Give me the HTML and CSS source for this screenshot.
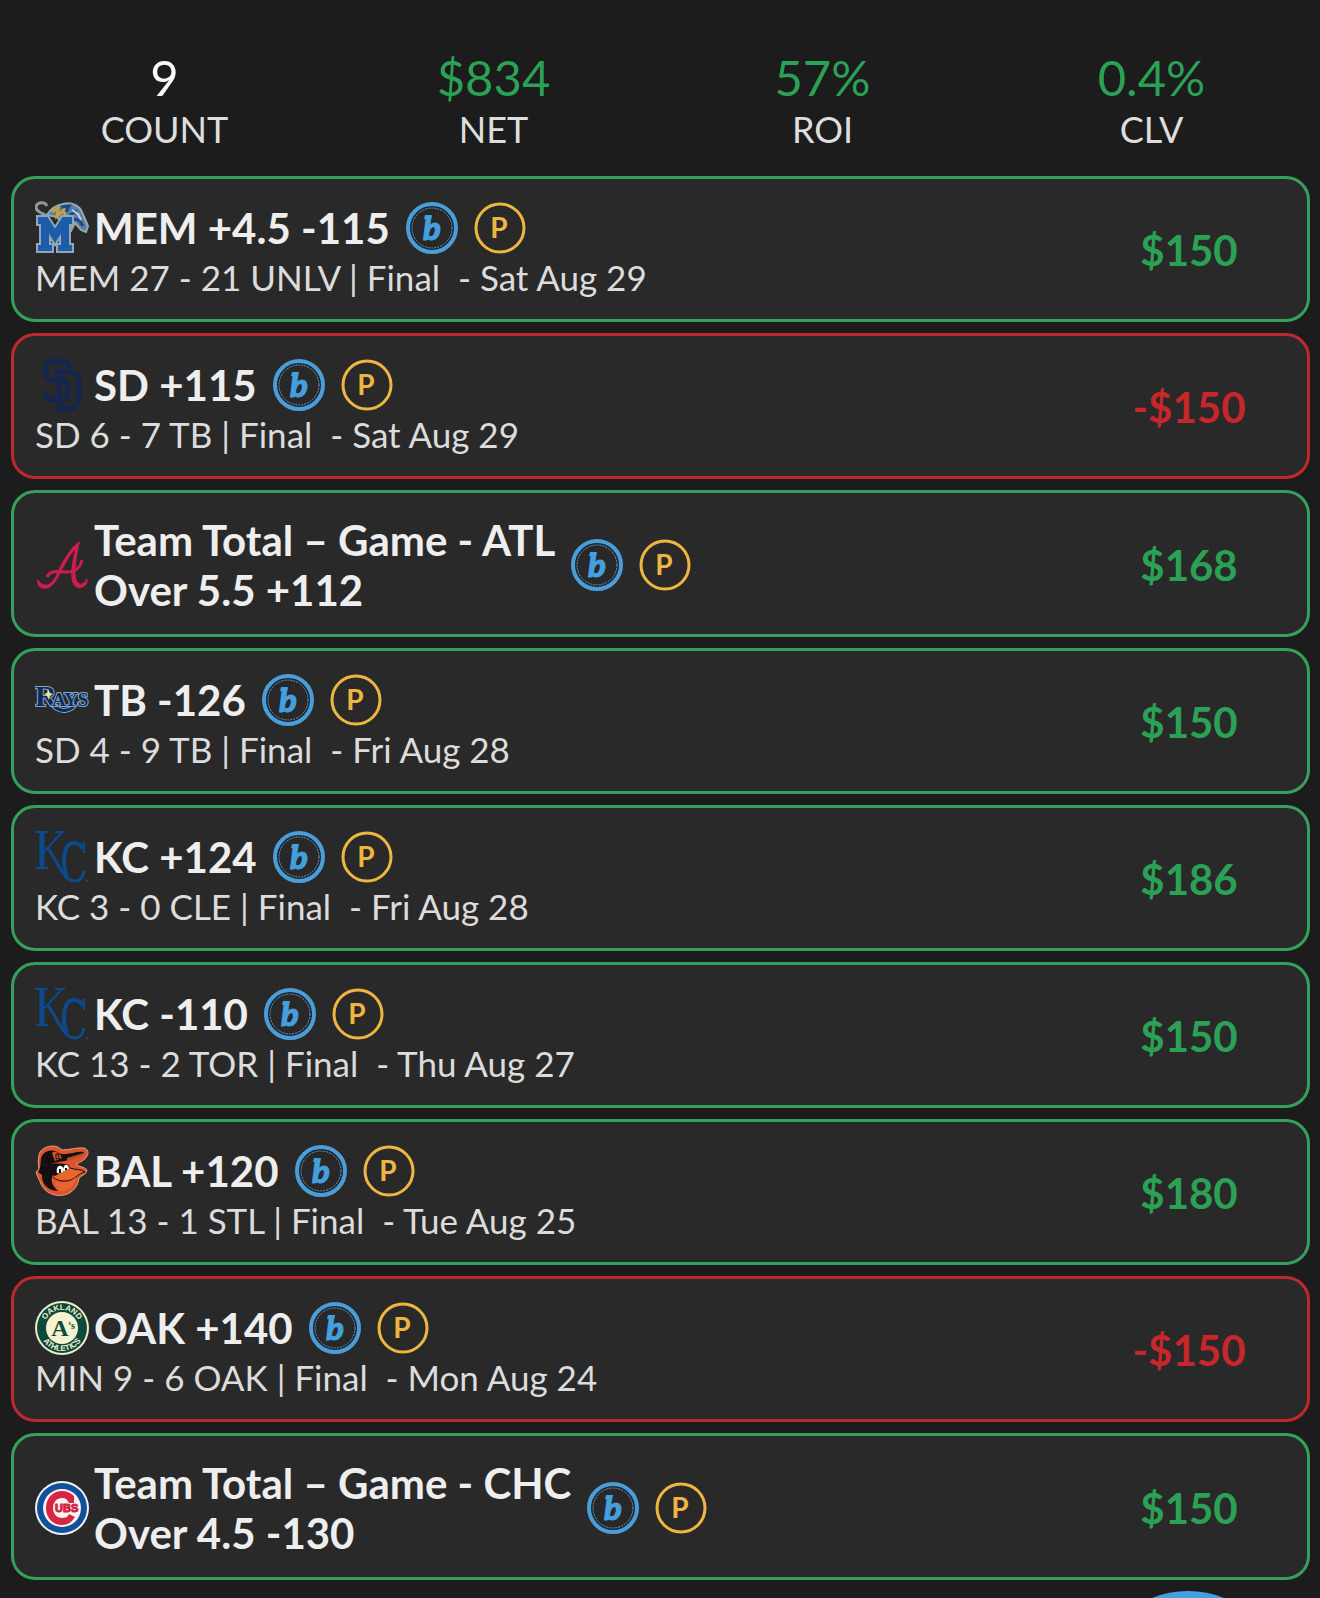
FILE: index.html
```html
<!DOCTYPE html>
<html lang="en">
<head>
<meta charset="utf-8">
<meta name="viewport" content="width=device-width, initial-scale=1">
<title>Bet history</title>
<link rel="stylesheet" href="styles.css">
</head>
<body>
<svg class="defs" aria-hidden="true">
  <symbol id="book" viewBox="0 0 52 52">
    <circle cx="26" cy="26" r="25" fill="#10263a"/>
    <circle cx="26" cy="26" r="20" fill="#282828"/>
    <circle cx="26" cy="26" r="24" fill="none" stroke="#4c9dd6" stroke-width="4"/>
    <circle cx="26" cy="26" r="20" fill="none" stroke="#8d979f" stroke-width="1" stroke-dasharray="2 1"/>
    <path d="M19 13H26L25 17H18Z" fill="#459fdf"/>
    <text class="book-letter" x="26" y="38" text-anchor="middle">b</text>
  </symbol>
  <symbol id="pending" viewBox="0 0 52 52">
    <circle cx="26" cy="26" r="24" fill="none" stroke="#efb541" stroke-width="3"/>
    <text class="pick-letter" x="25" y="36" text-anchor="middle">P</text>
  </symbol>
  <symbol id="kc" viewBox="0 0 54 54">
    <g fill="none" stroke="#0c4a8c">
      <path d="M7 2V38" stroke-width="5"/>
      <path d="M0 2H13M1 38H13M20 2H30" stroke-width="2"/>
      <path d="M26 3L9 22" stroke-width="2"/>
      <path d="M12 17C19 26 23 37 28 43C31 48 35 51 40 51C45 51 48 47 49 41" stroke-width="3"/>
      <path d="M48 19C46 14 43 13 39 13C32 13 29 21 29 31C29 37 30 42 32 46" stroke-width="4"/>
      <path d="M49 12V23M51 51H53" stroke-width="2"/>
    </g>
  </symbol>
</svg>

<main class="page">
  <dl class="stats">
    <div class="stat"><dd class="stat-value">9</dd><dt class="stat-label">COUNT</dt></div>
    <div class="stat"><dd class="stat-value gain">$834</dd><dt class="stat-label">NET</dt></div>
    <div class="stat"><dd class="stat-value gain">57%</dd><dt class="stat-label">ROI</dt></div>
    <div class="stat"><dd class="stat-value gain">0.4%</dd><dt class="stat-label">CLV</dt></div>
  </dl>

  <ul class="bets">
    <li class="bet won">
      <div class="info">
        <div class="headline">
          <svg class="logo" viewBox="0 0 54 54" role="img" aria-label="Memphis">
            <path d="M12 15C7 12 1 11 1 6C2 1 10 0 12 5" fill="none" stroke="#8f989f" stroke-width="3"/>
            <path d="M12 14C16 7 22 4 28 3C36 1 43 4 46 9L53 25L51 31L46 29L40 22L36 30L30 27L22 16Z" fill="#5b7fa5" stroke="#9ba6ad" stroke-width="2"/>
            <path d="M17 11L23 7L22 15L29 9L31 19M31 30L37 24" fill="none" stroke="#c9a03d" stroke-width="3"/>
            <path d="M26 6L34 5L31 11M35 14L42 10M38 18L44 19L48 25" fill="none" stroke="#174b8c" stroke-width="3"/>
            <path d="M37 9L43 13L46 19" fill="none" stroke="#c8d2da" stroke-width="2"/>
            <path d="M2 15H13L20 26L27 15H38V24H35V43H38V51H22V43H25V36L20 44L15 36V43H18V51H2V43H5V24H2Z" fill="#1c5ca9" stroke="#8fa6bb" stroke-width="2"/>
          </svg>
          <h2 class="title">MEM +4.5 -115</h2>
          <span class="badges"><svg class="badge" role="img" aria-label="Sportsbook"><use href="#book"/></svg><svg class="badge" role="img" aria-label="Pick"><use href="#pending"/></svg></span>
        </div>
        <p class="score">MEM 27 - 21 UNLV | Final&nbsp; - Sat Aug 29</p>
      </div>
      <p class="amount">$150</p>
    </li>

    <li class="bet lost">
      <div class="info">
        <div class="headline">
          <svg class="logo" viewBox="0 0 54 54" role="img" aria-label="San Diego">
            <g fill="none" stroke="#14264f" stroke-width="5" stroke-linejoin="round">
              <path d="M34 10V6L31 3H15L11 7V18L15 22H29L33 26V38L29 42H14L11 39V34"/>
              <path d="M19 14H38L44 20V45L38 51H20M24 14V51"/>
            </g>
          </svg>
          <h2 class="title">SD +115</h2>
          <span class="badges"><svg class="badge" role="img" aria-label="Sportsbook"><use href="#book"/></svg><svg class="badge" role="img" aria-label="Pick"><use href="#pending"/></svg></span>
        </div>
        <p class="score">SD 6 - 7 TB | Final&nbsp; - Sat Aug 29</p>
      </div>
      <p class="amount">-$150</p>
    </li>

    <li class="bet tall won">
      <div class="info">
        <div class="headline">
          <svg class="logo" viewBox="0 0 54 54" role="img" aria-label="Atlanta">
            <path d="M45 3C35 9 27 24 21 37C17 46 12 48 8 46C5 45 4 43 3 41C1 43 2 48 6 50C14 53 20 46 24 38C30 26 36 15 40 12C37 23 35 36 37 43C39 51 47 52 51 47C53 44 53 41 52 40C50 44 47 47 44 45C38 41 41 22 45 3Z" fill="#cd1d4f"/>
            <path d="M12 39C16 31 24 34 31 34C40 34 45 31 47 22" fill="none" stroke="#cd1d4f" stroke-width="3"/>
          </svg>
          <h2 class="title">Team Total – Game - ATL<br>Over 5.5 +112</h2>
          <span class="badges"><svg class="badge" role="img" aria-label="Sportsbook"><use href="#book"/></svg><svg class="badge" role="img" aria-label="Pick"><use href="#pending"/></svg></span>
        </div>
      </div>
      <p class="amount">$168</p>
    </li>

    <li class="bet won">
      <div class="info">
        <div class="headline">
          <svg class="logo" viewBox="0 0 54 54" role="img" aria-label="Tampa Bay">
            <path d="M13 25C17 34 25 39 32 37C38 36 40 33 41 29" fill="none" stroke="#86a6c8" stroke-width="5"/>
            <path d="M13 25C17 34 25 39 32 37C38 36 40 33 41 29" fill="none" stroke="#0c2c5e" stroke-width="3"/>
            <text class="rays" y="33"><tspan class="rays-cap" x="0">R</tspan><tspan x="17">AYS</tspan></text>
            <path d="M13 16L15 20L18 21L15 23L14 27L12 23L9 21L12 20Z" fill="#f2e08a"/>
          </svg>
          <h2 class="title">TB -126</h2>
          <span class="badges"><svg class="badge" role="img" aria-label="Sportsbook"><use href="#book"/></svg><svg class="badge" role="img" aria-label="Pick"><use href="#pending"/></svg></span>
        </div>
        <p class="score">SD 4 - 9 TB | Final&nbsp; - Fri Aug 28</p>
      </div>
      <p class="amount">$150</p>
    </li>

    <li class="bet won">
      <div class="info">
        <div class="headline">
          <svg class="logo" role="img" aria-label="Kansas City"><use href="#kc"/></svg>
          <h2 class="title">KC +124</h2>
          <span class="badges"><svg class="badge" role="img" aria-label="Sportsbook"><use href="#book"/></svg><svg class="badge" role="img" aria-label="Pick"><use href="#pending"/></svg></span>
        </div>
        <p class="score">KC 3 - 0 CLE | Final&nbsp; - Fri Aug 28</p>
      </div>
      <p class="amount">$186</p>
    </li>

    <li class="bet won">
      <div class="info">
        <div class="headline">
          <svg class="logo" role="img" aria-label="Kansas City"><use href="#kc"/></svg>
          <h2 class="title">KC -110</h2>
          <span class="badges"><svg class="badge" role="img" aria-label="Sportsbook"><use href="#book"/></svg><svg class="badge" role="img" aria-label="Pick"><use href="#pending"/></svg></span>
        </div>
        <p class="score">KC 13 - 2 TOR | Final&nbsp; - Thu Aug 27</p>
      </div>
      <p class="amount">$150</p>
    </li>

    <li class="bet won">
      <div class="info">
        <div class="headline">
          <svg class="logo" viewBox="0 0 54 54" role="img" aria-label="Baltimore">
            <path d="M4 11C5 5 12 2 18 2C22 2 25 4 27 6C35 6 43 3 49 4C53 5 54 9 52 12C50 16 46 18 41 20C44 23 50 23 52 26C51 31 47 31 44 34C43 42 38 49 29 51C20 53 10 49 6 40C4 35 2 32 1 28L4 25C3 20 3 15 4 11Z" fill="#dd5430" stroke="#e39b80" stroke-width="1"/>
            <path d="M6 14C8 8 14 5 20 7L26 10C34 11 41 7 49 8C47 14 38 14 30 17C25 18 20 18 15 20C10 20 7 22 5 25Z" fill="#14100f"/>
            <path d="M6 22C14 18 28 19 34 21L35 26L32 32L23 34L18 31C15 36 17 42 23 47C12 47 6 38 7 31L3 28Z" fill="#14100f"/>
            <path d="M17 9C20 6 25 9 27 14L20 17Z" fill="#d9532b"/>
            <path d="M21 10V15M21 10H24L23 12L25 14L21 15" fill="none" stroke="#14100f"/>
            <path d="M32 14C38 12 43 11 49 9C46 14 38 16 32 17Z" fill="#c34d2b"/>
            <path d="M22 29C21 24 23 21 26 22C29 23 29 27 27 30ZM29 29C27 23 30 20 32 21C35 23 34 27 32 29Z" fill="#fff"/>
            <path d="M25 25V29M31 24V28" stroke="#14100f" stroke-width="2"/>
            <path d="M35 24C41 26 46 25 50 28C43 29 40 37 30 37C25 37 21 36 18 33" fill="#e6662e" stroke="#14100f"/>
            <path d="M20 37C28 41 36 38 41 33C40 41 34 47 27 47C23 46 19 42 20 37Z" fill="#e6662e"/>
          </svg>
          <h2 class="title">BAL +120</h2>
          <span class="badges"><svg class="badge" role="img" aria-label="Sportsbook"><use href="#book"/></svg><svg class="badge" role="img" aria-label="Pick"><use href="#pending"/></svg></span>
        </div>
        <p class="score">BAL 13 - 1 STL | Final&nbsp; - Tue Aug 25</p>
      </div>
      <p class="amount">$180</p>
    </li>

    <li class="bet lost">
      <div class="info">
        <div class="headline">
          <svg class="logo" viewBox="0 0 54 54" role="img" aria-label="Oakland">
            <circle cx="27" cy="27" r="27" fill="#f0ecc8"/>
            <circle cx="27" cy="27" r="25" fill="#0b4a3c"/>
            <circle cx="27" cy="27" r="16" fill="#f6f2cf"/>
            <path id="oak-top" d="M9 27A18 18 0 0 1 45 27" fill="none"/>
            <path id="oak-bottom" d="M4 27A23 23 0 0 0 50 27" fill="none"/>
            <text class="oak-ring"><textPath href="#oak-top" startOffset="50%" text-anchor="middle">OAKLAND</textPath></text>
            <text class="oak-ring"><textPath href="#oak-bottom" startOffset="50%" text-anchor="middle">ATHLETICS</textPath></text>
            <text class="oak-a" x="25" y="35" text-anchor="middle">A</text>
            <text class="oak-s" x="33" y="28">’s</text>
          </svg>
          <h2 class="title">OAK +140</h2>
          <span class="badges"><svg class="badge" role="img" aria-label="Sportsbook"><use href="#book"/></svg><svg class="badge" role="img" aria-label="Pick"><use href="#pending"/></svg></span>
        </div>
        <p class="score">MIN 9 - 6 OAK | Final&nbsp; - Mon Aug 24</p>
      </div>
      <p class="amount">-$150</p>
    </li>

    <li class="bet tall won">
      <div class="info">
        <div class="headline">
          <svg class="logo" viewBox="0 0 54 54" role="img" aria-label="Chicago Cubs">
            <circle cx="27" cy="27" r="27" fill="#eef2f6"/>
            <circle cx="27" cy="27" r="25" fill="#12509a"/>
            <circle cx="27" cy="27" r="19" fill="#f4f4f6"/>
            <path d="M39 15V22H34C32 18 30 17 27 17C22 17 18 21 18 27C18 33 22 37 27 37C30 37 33 36 34 33L40 36C37 41 33 44 27 44C18 44 11 37 11 27C11 17 18 10 27 10C32 10 36 12 39 15Z" fill="#d62640"/>
            <text class="cubs" x="20" y="31">UBS</text>
          </svg>
          <h2 class="title">Team Total – Game - CHC<br>Over 4.5 -130</h2>
          <span class="badges"><svg class="badge" role="img" aria-label="Sportsbook"><use href="#book"/></svg><svg class="badge" role="img" aria-label="Pick"><use href="#pending"/></svg></span>
        </div>
      </div>
      <p class="amount">$150</p>
    </li>
  </ul>
</main>
<button class="fab" type="button" aria-label="Add bet"></button>
</body>
</html>
```
FILE: styles.css
```css
* {
  box-sizing: border-box;
}

body {
  margin: 0;
  background: #1c1c1c;
  color: #eeeeee;
  font-family: Lato, "Open Sans", sans-serif;
}

.defs {
  display: none;
}

.page {
  padding: 48px 0 16px;
}

.stats {
  display: grid;
  grid-template-columns: repeat(4, 1fr);
  margin: 0;
  padding-right: 4px;
  text-align: center;
}

.stat {
  display: flex;
  flex-direction: column;
}

.stat-value {
  margin: 0;
  color: #fafafa;
  font-size: 49px;
  line-height: 58px;
}

.stat-label {
  color: #dedede;
  font-size: 36px;
  line-height: 46px;
}

.stat-value.gain {
  color: #2ba155;
}

.bets {
  display: flex;
  flex-direction: column;
  gap: 11px;
  margin: 24px 0 0;
  padding: 0 10px 0 11px;
  list-style: none;
}

.bet {
  display: grid;
  grid-template-columns: 1fr 236px;
  align-items: center;
  min-height: 146px;
  padding-left: 21px;
  border: 3px solid;
  border-radius: 24px;
  background: #292929;
}

.tall {
  min-height: 147px;
}

.won {
  border-color: #35a05b;
}

.lost {
  border-color: #bf282d;
}

.headline {
  display: flex;
  align-items: center;
  gap: 5px;
  min-height: 54px;
}

.logo {
  flex: none;
  width: 54px;
  height: 54px;
}

.title {
  margin: 0;
  font-size: 42px;
  font-weight: 700;
  line-height: 50px;
}

.badges {
  display: flex;
  flex: none;
  gap: 16px;
  margin-left: 11px;
}

.badge {
  width: 52px;
  height: 52px;
}

.score {
  margin: 0;
  color: #dcdcdc;
  font-size: 35px;
  line-height: 44px;
}

.info,
.amount {
  padding-top: 2px;
}

.amount {
  margin: 0;
  font-size: 42px;
  font-weight: 700;
  line-height: 50px;
  text-align: center;
}

.won .amount {
  color: #2ba155;
}

.lost .amount {
  color: #c5272b;
}

.book-letter {
  fill: #459fdf;
  stroke: #459fdf;
  stroke-width: 1px;
  font: italic 900 33px Lato, sans-serif;
}

.pick-letter {
  fill: #efb541;
  font: bold 28px Lato, sans-serif;
}

.rays {
  fill: #0c2c5e;
  stroke: #86a6c8;
  stroke-width: 2px;
  paint-order: stroke;
  font: bold 19px "Liberation Serif", serif;
}

.rays-cap {
  font-size: 30px;
}

.oak-ring {
  fill: #f6f2cf;
  font: bold 8px "Liberation Sans", sans-serif;
}

.oak-a {
  fill: #0b4a3c;
  font: bold 24px "Liberation Serif", serif;
}

.oak-s {
  fill: #0b4a3c;
  font: bold 10px "Liberation Serif", serif;
}

.cubs {
  fill: #d62640;
  stroke: #d62640;
  stroke-width: 1px;
  font: bold 11px "Liberation Sans", sans-serif;
}

.fab {
  position: fixed;
  right: 36px;
  bottom: -185px;
  width: 192px;
  height: 192px;
  padding: 0;
  border: 0;
  border-radius: 50%;
  background: #439fdd;
}
```
